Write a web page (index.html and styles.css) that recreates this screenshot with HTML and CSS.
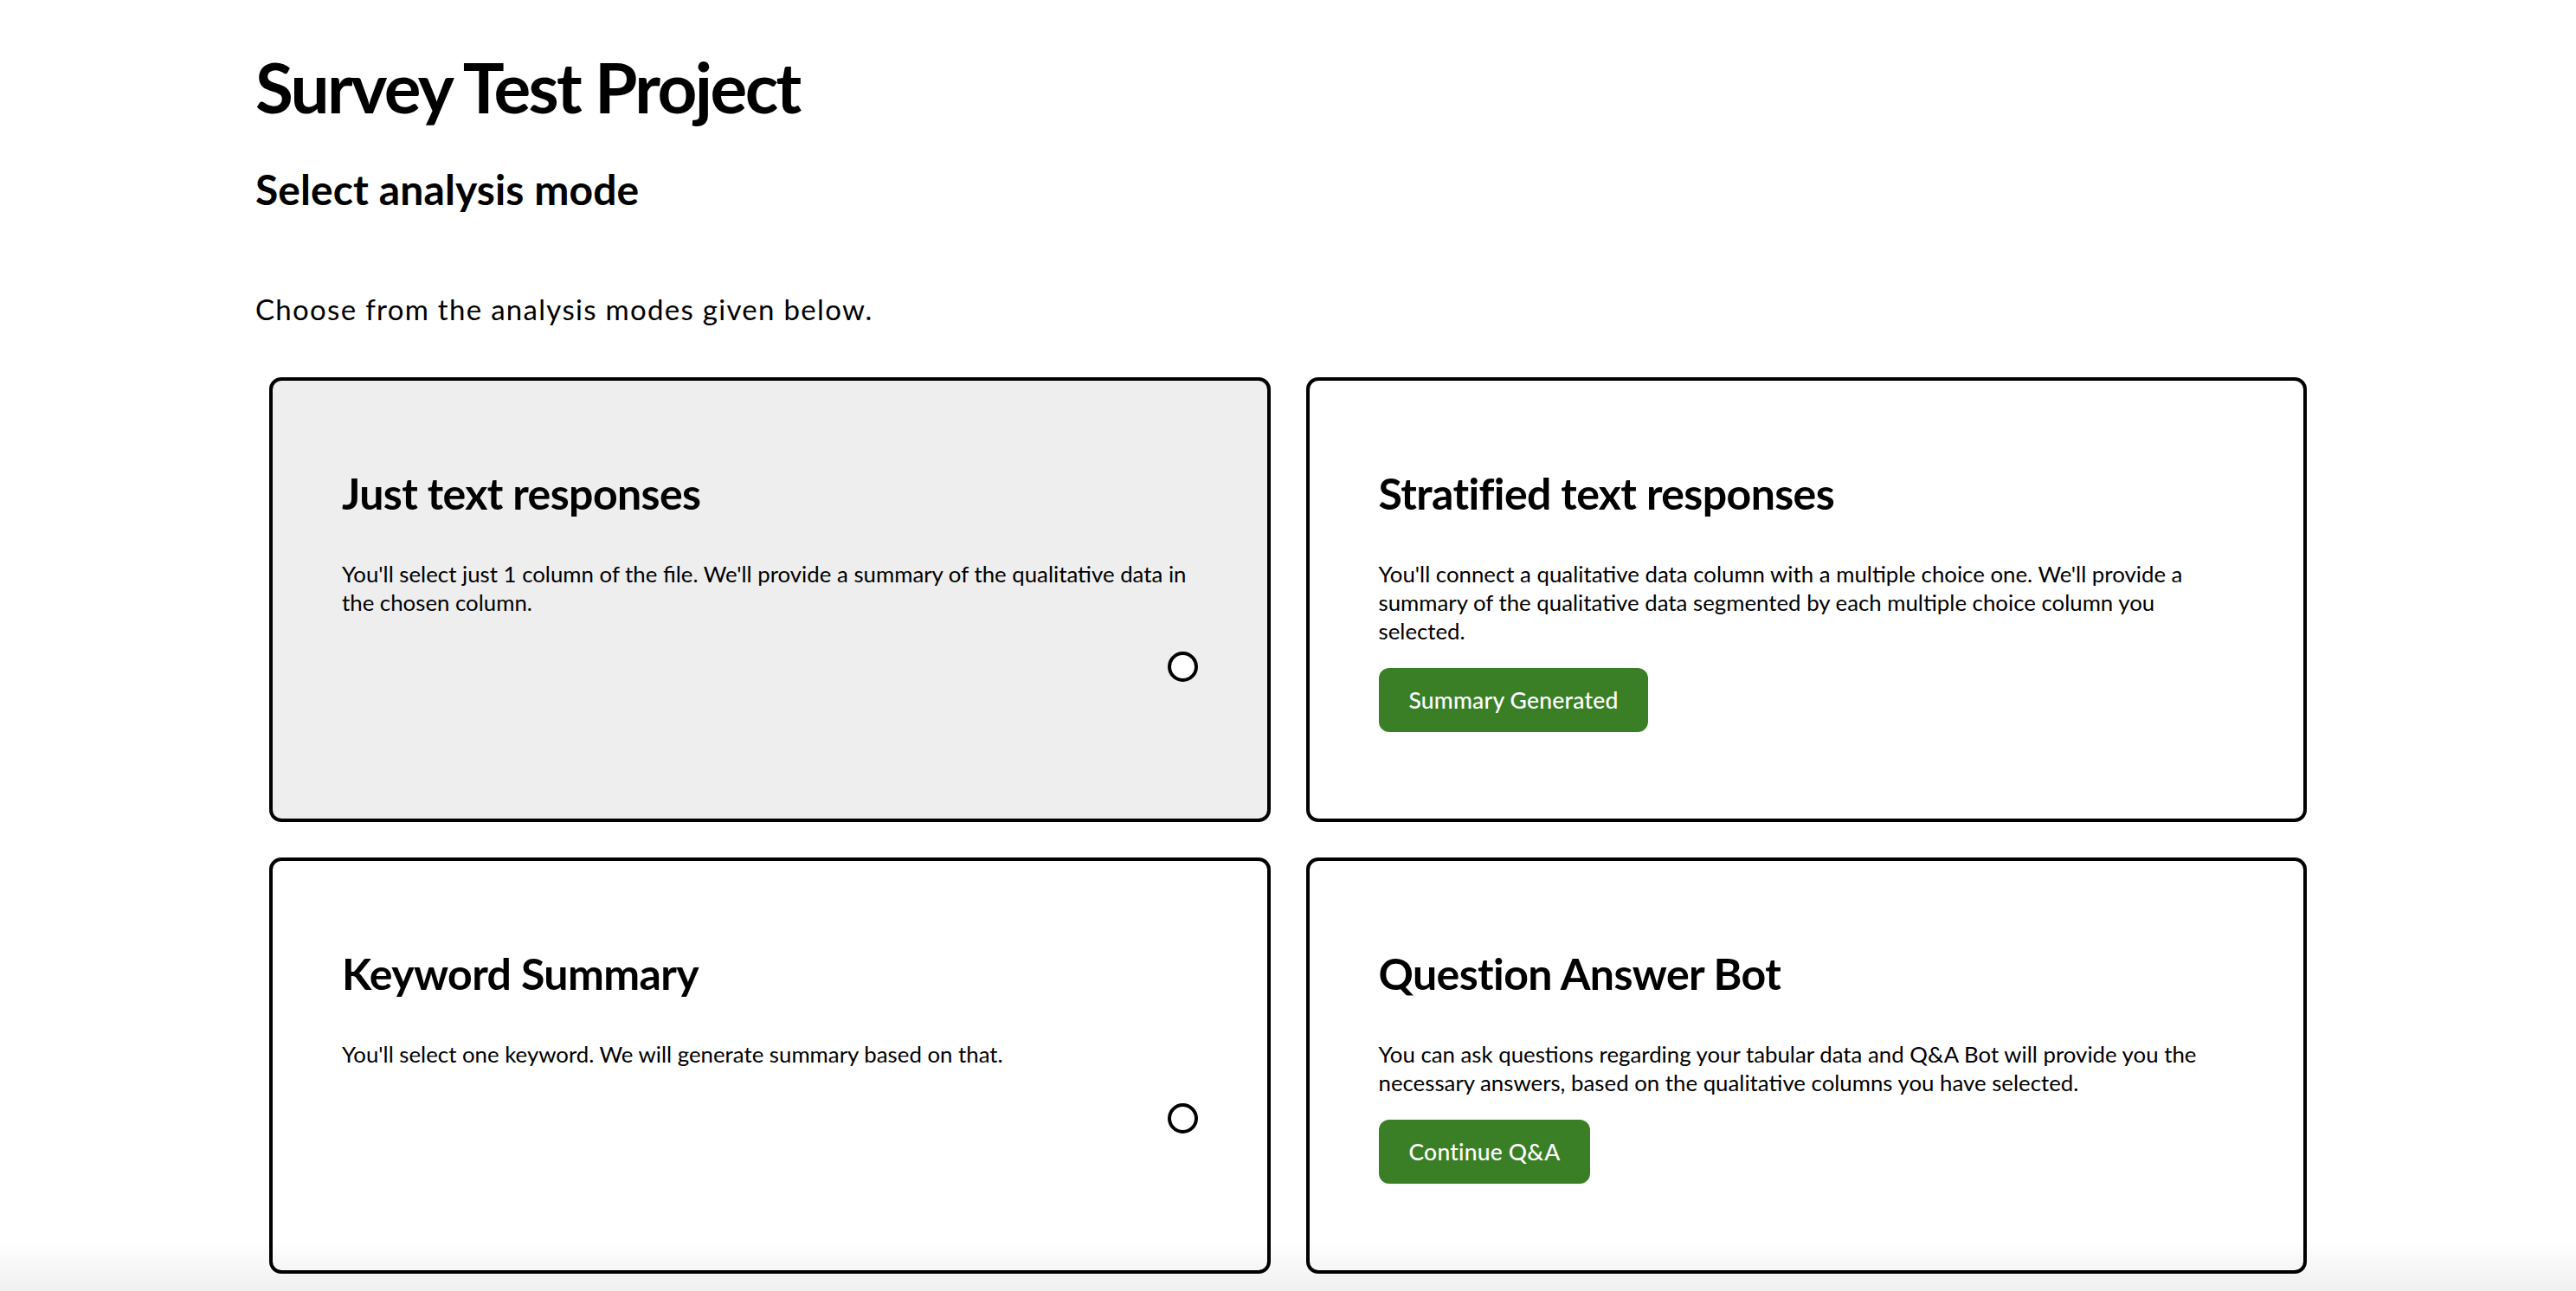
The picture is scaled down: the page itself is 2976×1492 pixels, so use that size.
FILE: index.html
```html
<!DOCTYPE html>
<html lang="en">
<head>
<meta charset="utf-8">
<title>Survey Test Project</title>
<link rel="stylesheet" href="styles.css">
</head>
<body>
<main class="page">
  <h1 class="page-title">Survey Test Project</h1>
  <h2 class="section-title">Select analysis mode</h2>
  <p class="intro">Choose from the analysis modes given below.</p>

  <section class="modes">
    <article class="mode-card is-active">
      <h3 class="mode-title">Just text responses</h3>
      <p class="mode-desc">You'll select just 1 column of the file. We'll provide a summary of the qualitative data in the chosen column.</p>
      <div class="mode-footer radio-row"><span class="radio"></span></div>
    </article>

    <article class="mode-card">
      <h3 class="mode-title">Stratified text responses</h3>
      <p class="mode-desc">You'll connect a qualitative data column with a multiple choice one. We'll provide a summary of the qualitative data segmented by each multiple choice column you selected.</p>
      <div class="mode-footer"><button class="btn">Summary Generated</button></div>
    </article>

    <article class="mode-card">
      <h3 class="mode-title">Keyword Summary</h3>
      <p class="mode-desc">You'll select one keyword. We will generate summary based on that.</p>
      <div class="mode-footer radio-row"><span class="radio"></span></div>
    </article>

    <article class="mode-card">
      <h3 class="mode-title">Question Answer Bot</h3>
      <p class="mode-desc">You can ask questions regarding your tabular data and Q&amp;A Bot will provide you the necessary answers, based on the qualitative columns you have selected.</p>
      <div class="mode-footer"><button class="btn">Continue Q&amp;A</button></div>
    </article>
  </section>
</main>
<div class="bottom-shade"></div>
</body>
</html>
```

FILE: styles.css
```css
* { box-sizing: border-box; }

html, body {
  margin: 0;
  padding: 0;
  background: #ffffff;
  color: #000000;
  font-family: "Lato", "Noto Sans", sans-serif;
}

.page {
  padding: 50px 295px 0;
}

.page-title {
  margin: 0;
  font-size: 80px;
  line-height: 100px;
  font-weight: 700;
  letter-spacing: -2.6px;
}

.section-title {
  margin: 40px 0 0;
  font-size: 48px;
  line-height: 58px;
  font-weight: 700;
  letter-spacing: 0.1px;
}

.intro {
  margin: 90px 0 0;
  font-size: 33px;
  line-height: 38px;
  font-weight: 400;
  letter-spacing: 1.3px;
}

.modes {
  margin: 60px 16px 0;
  display: grid;
  grid-template-columns: 1fr 1fr;
  gap: 41px;
}

.mode-card {
  border: 4px solid #000000;
  border-radius: 14px;
  background: #ffffff;
  padding: 100px 80px 100px;
  display: flex;
  flex-direction: column;
}

.mode-card.is-active {
  background: #eeeeee;
}

.mode-title {
  margin: 0;
  font-size: 50px;
  line-height: 60px;
  font-weight: 700;
  letter-spacing: -0.6px;
}

.mode-desc {
  margin: 47px 0 0;
  font-size: 25.8px;
  line-height: 33px;
  font-weight: 400;
}

.mode-footer {
  margin-top: 26px;
  display: flex;
}

.radio-row {
  margin-top: 40px;
  justify-content: flex-end;
}

.radio {
  width: 35px;
  height: 35px;
  border: 4px solid #000000;
  border-radius: 50%;
  background: #ffffff;
  display: block;
}

.btn {
  height: 74px;
  padding: 0 35px;
  border: none;
  border-radius: 12px;
  background: #3a7f26;
  color: #ffffff;
  font-family: inherit;
  font-size: 26.5px;
  font-weight: 500;
  letter-spacing: 0.2px;
  cursor: pointer;
}

.bottom-shade {
  position: fixed;
  left: 0;
  right: 0;
  bottom: 0;
  height: 60px;
  pointer-events: none;
  background: linear-gradient(to bottom, rgba(0, 0, 0, 0), rgba(0, 0, 0, 0.06));
}
```
